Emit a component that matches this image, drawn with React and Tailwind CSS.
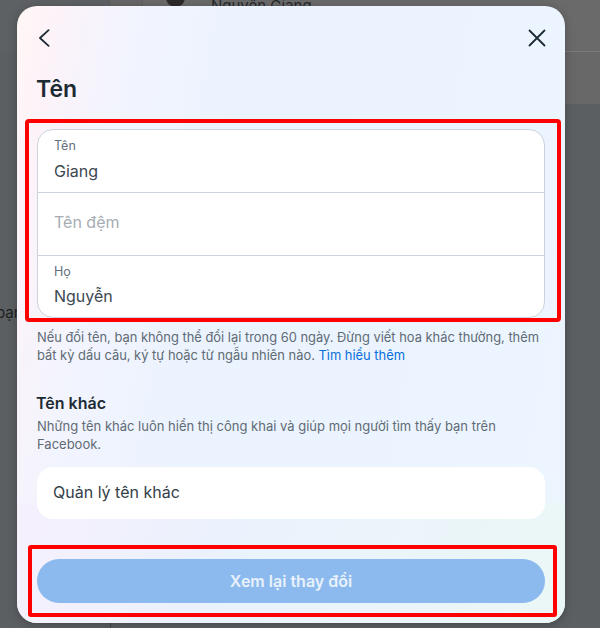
export default function App() {
  const font = { fontFamily: "Inter, 'Noto Sans', sans-serif" };
  return (
    <div style={font} className="relative h-[628px] w-[600px] overflow-hidden bg-[#5c5f62] text-[#1c2b33]">
      {/* page behind the dialog */}
      <div className="flex h-[52px] items-start border-b border-[#7a7a7a] bg-[#6a6a6a]">
        <div className="h-[52px] w-[110px] border-r border-[#5a5a5a] bg-[#5e6163]" />
        <div className="h-full w-[33px] border-r border-[#5f5f5f] bg-[#666666]" />
        <div className="-mt-[12px] ml-[23px] h-[19px] w-[19px] rounded-full bg-[#2c2a2a]" />
        <span className="-mt-[3px] ml-[26px] text-[15px] leading-[18px] text-[#26282b]">Nguyễn Giang</span>
      </div>
      <div className="ml-[110px] h-[52px] bg-[#686868]" />
      <span className="absolute left-[-4px] top-[304px] text-[15px] leading-[18px] text-[#1c1e21]">bạn</span>
      <div className="absolute bottom-0 left-[110px] top-[620px] w-px bg-[#44464a]" />

      {/* dialog */}
      <div className="absolute left-[17px] top-[6px] flex h-[617px] w-[548px] flex-col rounded-[20px] bg-[linear-gradient(100deg,#fff8f6_0%,#fdf3f8_5%,#f2f4fe_18%,#eaf3fe_40%,#edf6ff_100%)] px-[20px] shadow-[0_2px_10px_rgba(0,0,0,0.25)]">
        <div className="absolute inset-x-0 bottom-0 h-[120px] rounded-b-[20px] bg-[linear-gradient(110deg,rgba(245,240,253,0.9)_0%,rgba(234,241,251,0.6)_40%,rgba(235,247,246,0.95)_100%)]" />
        <div className="relative flex h-[64px] items-start justify-between pt-[23px]">
          <svg width="12" height="18" viewBox="0 0 12 18" fill="none" stroke="#1c2b33" strokeWidth="1.8" strokeLinecap="round" strokeLinejoin="round" className="ml-[1px]">
            <path d="M10.6 1.2 2 9l8.6 7.8" />
          </svg>
          <svg width="18" height="18" viewBox="0 0 18 18" fill="none" stroke="#1c2b33" strokeWidth="1.8" strokeLinecap="round" className="mr-[-1px]">
            <path d="M1.5 1.5l15 15M16.5 1.5l-15 15" />
          </svg>
        </div>
        <h1 className="relative -ml-[1px] h-[59px] pt-[1px] text-[23px] font-semibold leading-[36px] text-[#1c2b33]">Tên</h1>

        <div className="relative flex h-[189px] flex-col overflow-hidden rounded-[16px] border border-[#ccd3dc] bg-white">
          <div className="h-[63px] border-b border-[#ccd3dc] px-[16px] pt-[8px]">
            <div className="text-[12.5px] leading-[16px] text-[#65707c]">Tên</div>
            <div className="mt-[6px] text-[16px] leading-[22px] text-[#3c4852]">Giang</div>
          </div>
          <div className="flex h-[63px] items-start border-b border-[#ccd3dc] px-[16px] pt-[18px]">
            <span className="text-[16px] leading-[22px] text-[#a7adb3]">Tên đệm</span>
          </div>
          <div className="h-[61px] px-[16px] pt-[8px]">
            <div className="text-[12.5px] leading-[16px] text-[#65707c]">Họ</div>
            <div className="mt-[5px] text-[16px] leading-[22px] text-[#3c4852]">Nguyễn</div>
          </div>
        </div>

        <p className="relative mt-[11px] text-[12.9px] leading-[18px] text-[#5f6b75]">
          Nếu đổi tên, bạn không thể đổi lại trong 60 ngày. Đừng viết hoa khác thường, thêm bất kỳ dấu câu, ký tự hoặc từ ngẫu nhiên nào. <span className="text-[#0a6fdc]">Tìm hiểu thêm</span>
        </p>

        <h2 className="relative -ml-[1px] mt-[27px] text-[16px] font-semibold leading-[22px] text-[#1c2b33]">Tên khác</h2>
        <p className="relative mt-[3px] text-[13px] leading-[18px] text-[#5f6b75]">
          Những tên khác luôn hiển thị công khai và giúp mọi người tìm thấy bạn trên Facebook.
        </p>

        <div className="relative mt-[14px] flex h-[52px] items-center rounded-[16px] bg-white px-[16px] pb-[2px] text-[16px] text-[#344049]">
          Quản lý tên khác
        </div>

        <button className="relative mt-[40px] flex h-[44px] items-center justify-center rounded-full bg-[#8cbaee] text-[16px] font-semibold text-[#e9f2fc]">
          Xem lại thay đổi
        </button>
      </div>

      {/* red annotation frames */}
      <div className="absolute left-[25px] top-[119px] h-[203px] w-[536px] rounded-[4px] border-[4px] border-[#ff0000]" />
      <div className="absolute left-[28px] top-[545px] h-[72px] w-[529px] rounded-[3px] border-[4px] border-[#ff0000]" />
    </div>
  );
}
